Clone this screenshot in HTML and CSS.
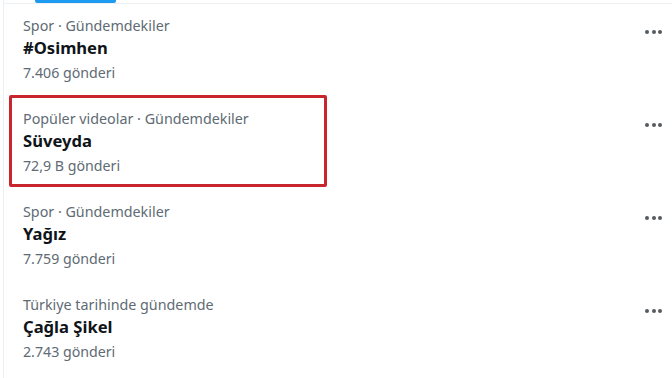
FILE: index.html
```html
<!DOCTYPE html>
<html lang="tr">

<head>
    <meta charset="UTF-8">
    <meta name="viewport" content="width=device-width, initial-scale=1.0">
    <title>Gündem</title>
    <link rel="stylesheet" href="styles.css">
</head>

<body>
    <div class="panel">
        <div class="top">
            <div class="tab-bar"></div>
        </div>

        <div class="trend">
            <div class="info">
                <div class="meta">Spor · Gündemdekiler</div>
                <div class="name">#Osimhen</div>
                <div class="count">7.406 gönderi</div>
            </div>
            <div class="more"><span></span><span></span><span></span></div>
        </div>

        <div class="trend">
            <div class="info">
                <div class="meta">Popüler videolar · Gündemdekiler</div>
                <div class="name">Süveyda</div>
                <div class="count">72,9 B gönderi</div>
            </div>
            <div class="more"><span></span><span></span><span></span></div>
            <!-- red annotation box -->
            <div class="mark"></div>
        </div>

        <div class="trend">
            <div class="info">
                <div class="meta">Spor · Gündemdekiler</div>
                <div class="name">Yağız</div>
                <div class="count">7.759 gönderi</div>
            </div>
            <div class="more"><span></span><span></span><span></span></div>
        </div>

        <div class="trend">
            <div class="info">
                <div class="meta">Türkiye tarihinde gündemde</div>
                <div class="name">Çağla Şikel</div>
                <div class="count">2.743 gönderi</div>
            </div>
            <div class="more"><span></span><span></span><span></span></div>
        </div>
    </div>
</body>

</html>
```

FILE: styles.css
```css
body {
    margin: 0;
    background-color: #fff;
    font-family: 'Noto Sans', 'Open Sans', sans-serif;
    color: #0f1419;
}

.panel {
    margin-left: 3px;
    border-left: 1px solid #eceff1;
    height: 378px;
}

.top {
    height: 3px;
    border-bottom: 1px solid #eef1f3;
}

.tab-bar {
    width: 81px;
    height: 3px;
    margin-left: 31px;
    background-color: #1d9bf0;
    border-radius: 0 0 2px 2px;
}

.trend {
    position: relative;
    display: flex;
    justify-content: space-between;
    height: 93px;
    padding: 12px 0 0 19px;
    box-sizing: border-box;
}

.meta {
    font-size: 14.3px;
    line-height: 20px;
    color: #606b74;
}

.name {
    font-size: 16.6px;
    font-weight: bold;
    line-height: 24px;
}

.count {
    font-size: 14.2px;
    line-height: 26px;
    color: #606b74;
}

.more {
    display: flex;
    gap: 2.5px;
    margin: 14px 10px 0 0;
}

.more span {
    width: 4px;
    height: 4px;
    border-radius: 50%;
    background-color: #555b60;
}

.mark {
    position: absolute;
    left: 5px;
    top: -2px;
    width: 312px;
    height: 86px;
    border: 3px solid #c9252e;
    border-radius: 2px;
}
```
